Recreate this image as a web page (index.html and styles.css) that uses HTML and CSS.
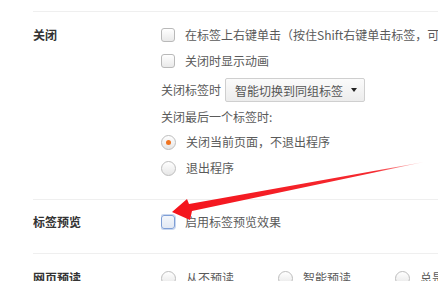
FILE: index.html
```html
<!DOCTYPE html>
<html lang="zh-CN">
<head>
<meta charset="utf-8">
<title>标签设置</title>
<link rel="stylesheet" href="styles.css">
</head>
<body>
<div class="page">
  <section class="group g1">
    <div class="label">关闭</div>
    <div class="opts">
      <div class="row h26"><span class="cb"></span><span class="txt">在标签上右键单击（按住Shift右键单击标签，可将</span></div>
      <div class="row h26"><span class="cb"></span><span class="txt">关闭时显示动画</span></div>
      <div class="row h32"><span class="plain">关闭标签时</span><span class="select"><span class="sel-text">智能切换到同组标签</span><span class="caret"></span></span></div>
      <div class="row h22"><span class="plain">关闭最后一个标签时:</span></div>
      <div class="row h28"><span class="rb on"></span><span class="txt">关闭当前页面，不退出程序</span></div>
      <div class="row h24"><span class="rb"></span><span class="txt">退出程序</span></div>
    </div>
  </section>
  <section class="group g2">
    <div class="label">标签预览</div>
    <div class="opts">
      <div class="row h26"><span class="cb focus"></span><span class="txt">启用标签预览效果</span></div>
    </div>
  </section>
  <section class="group g3">
    <div class="label">网页预读</div>
    <div class="opts">
      <div class="row h26 radios">
        <span class="ri"><span class="rb"></span><span class="txt">从不预读</span></span>
        <span class="ri"><span class="rb"></span><span class="txt">智能预读</span></span>
        <span class="ri"><span class="rb"></span><span class="txt">总是预读</span></span>
      </div>
    </div>
  </section>
</div>
<svg class="arrow" width="438" height="281" viewBox="0 0 438 281">
  <defs>
    <linearGradient id="fade" x1="172" y1="0" x2="425" y2="0" gradientUnits="userSpaceOnUse">
      <stop offset="0" stop-color="#f4141c"/>
      <stop offset="0.8" stop-color="#f52a30"/>
      <stop offset="1" stop-color="#f52a30" stop-opacity="0.15"/>
    </linearGradient>
  </defs>
  <polygon fill="url(#fade)" points="172,212 187,199 189,204 424,162 192,211 190,220"/>
</svg>
</body>
</html>
```
FILE: styles.css
```css
html, body {
  margin: 0;
  padding: 0;
  background: #ffffff;
  overflow: hidden;
}
body {
  width: 438px;
  height: 281px;
  position: relative;
  font-family: "Noto Sans CJK SC", "Noto Sans", sans-serif;
  font-size: 12px;
  color: #5a5a5a;
}
.page {
  padding-top: 11px;
  padding-left: 33px;
}
.group {
  display: flex;
  border-top: 1px solid #efefef;
}
.g1 { padding: 10px 0 19px; }
.g2 { padding: 9px 0 18px; }
.g3 { padding: 11px 0 0; }
.label {
  width: 128px;
  flex: none;
  font-weight: bold;
  color: #333333;
  line-height: 26px;
  white-space: nowrap;
}
.opts {
  display: flex;
  flex-direction: column;
  flex: 1;
  min-width: 0;
  overflow: hidden;
}
.row {
  display: flex;
  align-items: center;
  white-space: nowrap;
}
.h22 { height: 22px; }
.h24 { height: 24px; }
.h26 { height: 26px; }
.h28 { height: 28px; }
.h32 { height: 32px; }
.txt { margin-left: 10px; line-height: 16px; }
.plain { line-height: 16px; }
.cb {
  flex: none;
  width: 12px;
  height: 12px;
  border: 1px solid #b9b9b9;
  border-radius: 3px;
  background: linear-gradient(#ffffff, #e9e9e9);
}
.cb.focus {
  border-color: #7f9fd6;
  background: linear-gradient(#f4f7fc, #e3e9f3);
  box-shadow: 0 0 0 1px #c9d7ef;
}
.rb {
  flex: none;
  position: relative;
  width: 13px;
  height: 13px;
  border: 1px solid #bdbdbd;
  border-radius: 50%;
  background: linear-gradient(#ffffff, #e6e6e6);
}
.rb.on::after {
  content: "";
  position: absolute;
  left: 4px;
  top: 4px;
  width: 5px;
  height: 5px;
  border-radius: 50%;
  background: #f0731f;
}
.select {
  display: flex;
  align-items: center;
  justify-content: space-between;
  box-sizing: border-box;
  width: 140px;
  height: 24px;
  margin-left: 4px;
  padding: 0 7px 0 9px;
  border: 1px solid #cfcfcf;
  border-radius: 2px;
  background: linear-gradient(#fbfbfb, #ececec);
  color: #555555;
}
.caret {
  width: 0;
  height: 0;
  border-left: 3.5px solid transparent;
  border-right: 3.5px solid transparent;
  border-top: 4px solid #222222;
}
.radios .ri {
  display: flex;
  flex: none;
  align-items: center;
  width: 117px;
}
.arrow {
  position: absolute;
  left: 0;
  top: 0;
  pointer-events: none;
}
```
